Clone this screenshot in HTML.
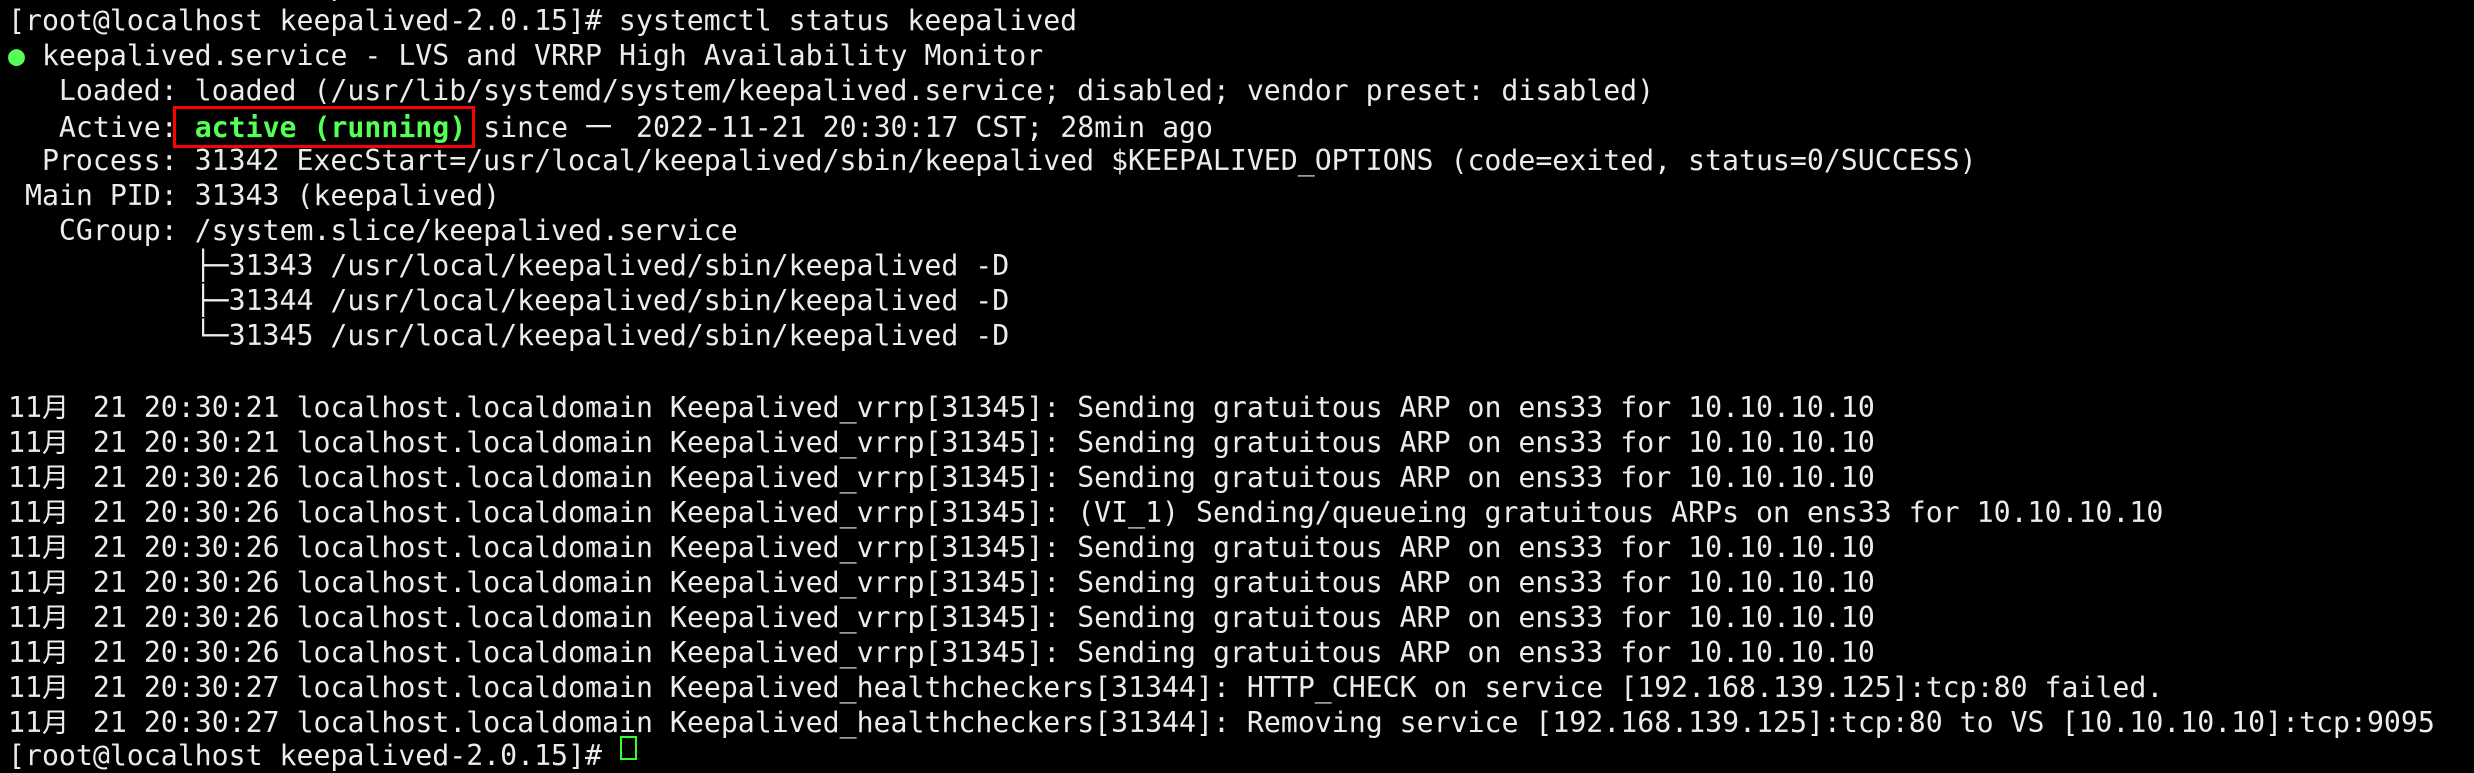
<!DOCTYPE html>
<html><head><meta charset="utf-8"><style>
html,body{margin:0;padding:0;background:#000;}
body{width:2474px;height:750px;overflow:hidden;position:relative;}
.r{position:absolute;left:8px;height:35px;line-height:35px;white-space:pre;font-family:"DejaVu Sans Mono","Liberation Mono","Noto Sans CJK SC",monospace;font-size:28.2px;color:#ececec;}
.c{display:inline-block;width:34px;font-family:"Noto Sans CJK SC","WenQuanYi Zen Hei",sans-serif;font-size:27px;text-align:left;}
.g{color:#55ff55;font-weight:bold;}
.box{position:absolute;left:173px;top:106px;width:296px;height:36px;border:3px solid #ff0000;}
.cur{position:absolute;left:620px;top:736px;width:13px;height:20px;border:2px solid #33ff33;}
</style></head><body>
<div class="r" style="top:-32px">[root@localhost keepalived-2.0.15]# </div>
<div class="r" style="top:3px">[root@localhost keepalived-2.0.15]# systemctl status keepalived</div>
<div class="r" style="top:38px"><span class="g" style="font-weight:normal">●</span> keepalived.service - LVS and VRRP High Availability Monitor</div>
<div class="r" style="top:73px">   Loaded: loaded (/usr/lib/systemd/system/keepalived.service; disabled; vendor preset: disabled)</div>
<div class="r" style="top:108px">   Active: <span class="g">active (running)</span> since <span class="c">一</span> 2022-11-21 20:30:17 CST; 28min ago</div>
<div class="r" style="top:143px">  Process: 31342 ExecStart=/usr/local/keepalived/sbin/keepalived $KEEPALIVED_OPTIONS (code=exited, status=0/SUCCESS)</div>
<div class="r" style="top:178px"> Main PID: 31343 (keepalived)</div>
<div class="r" style="top:213px">   CGroup: /system.slice/keepalived.service</div>
<div class="r" style="top:248px">           ├─31343 /usr/local/keepalived/sbin/keepalived -D</div>
<div class="r" style="top:283px">           ├─31344 /usr/local/keepalived/sbin/keepalived -D</div>
<div class="r" style="top:318px">           └─31345 /usr/local/keepalived/sbin/keepalived -D</div>
<div class="r" style="top:388px">11<span class="c">月</span> 21 20:30:21 localhost.localdomain Keepalived_vrrp[31345]: Sending gratuitous ARP on ens33 for 10.10.10.10</div>
<div class="r" style="top:423px">11<span class="c">月</span> 21 20:30:21 localhost.localdomain Keepalived_vrrp[31345]: Sending gratuitous ARP on ens33 for 10.10.10.10</div>
<div class="r" style="top:458px">11<span class="c">月</span> 21 20:30:26 localhost.localdomain Keepalived_vrrp[31345]: Sending gratuitous ARP on ens33 for 10.10.10.10</div>
<div class="r" style="top:493px">11<span class="c">月</span> 21 20:30:26 localhost.localdomain Keepalived_vrrp[31345]: (VI_1) Sending/queueing gratuitous ARPs on ens33 for 10.10.10.10</div>
<div class="r" style="top:528px">11<span class="c">月</span> 21 20:30:26 localhost.localdomain Keepalived_vrrp[31345]: Sending gratuitous ARP on ens33 for 10.10.10.10</div>
<div class="r" style="top:563px">11<span class="c">月</span> 21 20:30:26 localhost.localdomain Keepalived_vrrp[31345]: Sending gratuitous ARP on ens33 for 10.10.10.10</div>
<div class="r" style="top:598px">11<span class="c">月</span> 21 20:30:26 localhost.localdomain Keepalived_vrrp[31345]: Sending gratuitous ARP on ens33 for 10.10.10.10</div>
<div class="r" style="top:633px">11<span class="c">月</span> 21 20:30:26 localhost.localdomain Keepalived_vrrp[31345]: Sending gratuitous ARP on ens33 for 10.10.10.10</div>
<div class="r" style="top:668px">11<span class="c">月</span> 21 20:30:27 localhost.localdomain Keepalived_healthcheckers[31344]: HTTP_CHECK on service [192.168.139.125]:tcp:80 failed.</div>
<div class="r" style="top:703px">11<span class="c">月</span> 21 20:30:27 localhost.localdomain Keepalived_healthcheckers[31344]: Removing service [192.168.139.125]:tcp:80 to VS [10.10.10.10]:tcp:9095</div>
<div class="r" style="top:738px">[root@localhost keepalived-2.0.15]# </div>
<div class="box"></div>
<div class="cur"></div>
</body></html>
